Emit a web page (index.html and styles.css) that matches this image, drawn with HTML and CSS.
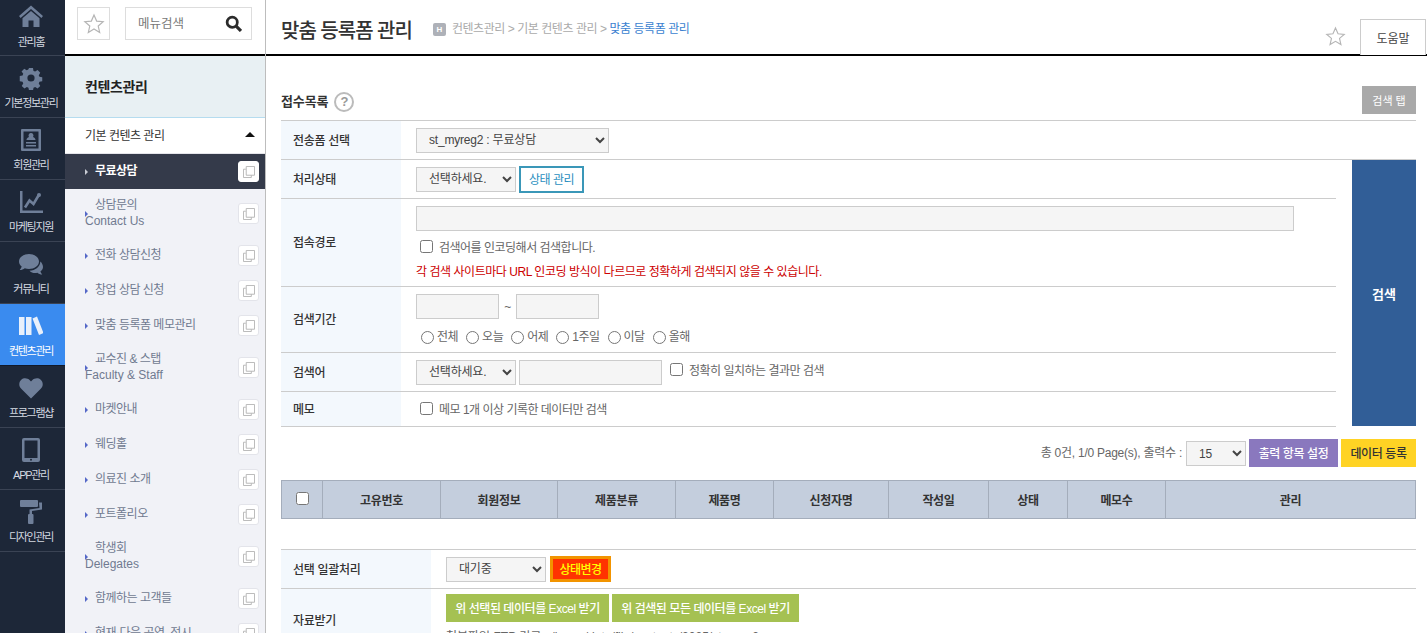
FILE: index.html
```html
<!DOCTYPE html>
<html lang="ko">
<head>
<meta charset="utf-8">
<title>맞춤 등록폼 관리</title>
<link rel="stylesheet" href="styles.css">
</head>
<body>
<svg class="defs" width="0" height="0" aria-hidden="true">
  <symbol id="copy" viewBox="0 0 13 13"><path d="M.5 3.500h2.500M.5 3.500v9h8.500v-2.500M3.500.5h9v9.500h-9z" fill="none" stroke="currentColor"/></symbol>
  <symbol id="star" viewBox="0 0 24 24"><path d="M12 2.200l2.900 6.600 7.100.7-5.400 4.700 1.600 7-6.200-3.700-6.200 3.700 1.600-7L2 9.500l7.100-.7z" fill="none" stroke="currentColor" stroke-width="1.300"/></symbol>
</svg>
<nav class="rail">
  <a class="rail-item"><svg class="rail-icon" viewBox="0 0 24 24"><path d="M12 1.500 0 12l1.600 2L12 5.100l10.400 8.900 1.600-2zM12 7 3.500 14.300V23H9.500v-6.500h5V23h6v-8.700z"/></svg><span>관리홈</span></a>
  <a class="rail-item"><svg class="rail-icon" viewBox="0 0 24 24"><path fill-rule="evenodd" d="M9.800 1h4.400l.6 3.100 1.800.8 2.700-1.700 3 3-1.700 2.700.8 1.800 3.100.6v4.400l-3.100.6-.8 1.800 1.700 2.700-3 3-2.700-1.700-1.800.8-.6 3.100H9.800l-.6-3.100-1.800-.8-2.700 1.700-3-3 1.700-2.700-.8-1.800-3.100-.6V9.800l3.100-.6.800-1.800L1.500 4.700l3-3 2.700 1.700 1.800-.8zM12 8a4 4 0 1 0 0 8 4 4 0 0 0 0-8z" transform="translate(1.200 1.200) scale(.9)"/></svg><span>기본정보관리</span></a>
  <a class="rail-item"><svg class="rail-icon" viewBox="0 0 24 24"><path fill-rule="evenodd" d="M3 1h18a1 1 0 0 1 1 1v20a1 1 0 0 1-1 1H3a1 1 0 0 1-1-1V2a1 1 0 0 1 1-1zm1.500 2.500v17h15v-17zM12 5a2.500 2.500 0 0 1 2 4c1.500.5 2.500 1.500 2.500 3h-9c0-1.500 1-2.500 2.500-3a2.500 2.500 0 0 1 2-4zM7 14h10v1.500H7zm0 3h10v1.500H7z"/></svg><span>회원관리</span></a>
  <a class="rail-item"><svg class="rail-icon" viewBox="0 0 24 24"><path d="M1 1h2.500v19.500H24V23H1z"/><path d="M6 17.500l4.500-7 4 3.500 5-8.500" fill="none" stroke="currentColor" stroke-width="2.600"/><circle cx="20" cy="5" r="2"/></svg><span>마케팅지원</span></a>
  <a class="rail-item"><svg class="rail-icon" viewBox="0 0 24 24"><path d="M10 2C4.500 2 0 5.300 0 9.500c0 2 1 3.800 2.700 5.100-.3 1.300-1 2.400-2 3.400 2 0 3.800-.7 5.100-1.800 1.300.5 2.700.8 4.200.8 5.500 0 10-3.300 10-7.500S15.500 2 10 2z"/><path d="M21.300 9.500c.1 5-5 9-10.800 9.200 1.200 1.500 3.500 2.300 5.700 2.300.7 0 1.500-.1 2.200-.3 1.200 1 2.800 1.800 4.800 1.800-.8-.8-1.500-1.900-1.800-3 1.600-1.200 2.600-2.800 2.600-4.500 0-2.200-1.100-4.200-2.700-5.500z"/></svg><span>커뮤니티</span></a>
  <a class="rail-item active"><svg class="rail-icon" viewBox="0 0 24 24"><path d="M0 3h5.500v18H0zM7 3h5.500v18H7zM13.500 4.500l4.500-2L24.500 19l-4.500 2z"/></svg><span>컨텐츠관리</span></a>
  <a class="rail-item"><svg class="rail-icon" viewBox="0 0 24 24"><path d="M12 22.500 2 12.500C-.5 9.800-.2 5.800 2.300 3.700 4.800 1.600 8.500 2 10.800 4.300L12 5.500l1.200-1.200c2.300-2.300 6-2.700 8.500-.6 2.500 2.100 2.800 6.100.3 8.800z"/></svg><span>프로그램샵</span></a>
  <a class="rail-item"><svg class="rail-icon" viewBox="0 0 24 24"><path fill-rule="evenodd" d="M5 0h14a2 2 0 0 1 2 2v20a2 2 0 0 1-2 2H5a2 2 0 0 1-2-2V2a2 2 0 0 1 2-2zm.500 2.500v17.500h13V2.500zM12 20.800a1 1 0 1 0 0 2 1 1 0 0 0 0-2z"/></svg><span>APP관리</span></a>
  <a class="rail-item"><svg class="rail-icon" viewBox="0 0 24 24"><path d="M2 0h16a1 1 0 0 1 1 1v5a1 1 0 0 1-1 1H2a1 1 0 0 1-1-1V1a1 1 0 0 1 1-1zM20 2.500h3v7l-10 1.500v3h-2.500V9.500l10-1.500z"/><rect x="9" y="14" width="5.500" height="10" rx="1"/></svg><span>디자인관리</span></a>
</nav>
<aside class="panel">
  <div class="panel-top">
    <button class="fav-box"><svg class="star-icon"><use href="#star"/></svg></button>
    <div class="menu-search"><span>메뉴검색</span>
      <svg class="mag" viewBox="0 0 16 16"><circle cx="6.800" cy="6.800" r="4.800" fill="none" stroke="currentColor" stroke-width="2.600"/><path d="M10.500 10.500 15 15" stroke="currentColor" stroke-width="3"/></svg>
    </div>
  </div>
  <h2 class="panel-title">컨텐츠관리</h2>
  <div class="sub-head"><span>기본 컨텐츠 관리</span><i class="caret"></i></div>
  <ul class="menu">
    <li class="menu-item current"><a>무료상담</a><b class="copy"><svg><use href="#copy"/></svg></b></li>
    <li class="menu-item double"><a>상담문의<br><span class="latin">Contact Us</span></a><b class="copy"><svg><use href="#copy"/></svg></b></li>
    <li class="menu-item"><a>전화 상담신청</a><b class="copy"><svg><use href="#copy"/></svg></b></li>
    <li class="menu-item"><a>창업 상담 신청</a><b class="copy"><svg><use href="#copy"/></svg></b></li>
    <li class="menu-item"><a>맞춤 등록폼 메모관리</a><b class="copy"><svg><use href="#copy"/></svg></b></li>
    <li class="menu-item double"><a>교수진 &amp; 스탭<br><span class="latin">Faculty &amp; Staff</span></a><b class="copy"><svg><use href="#copy"/></svg></b></li>
    <li class="menu-item"><a>마켓안내</a><b class="copy"><svg><use href="#copy"/></svg></b></li>
    <li class="menu-item"><a>웨딩홀</a><b class="copy"><svg><use href="#copy"/></svg></b></li>
    <li class="menu-item"><a>의료진 소개</a><b class="copy"><svg><use href="#copy"/></svg></b></li>
    <li class="menu-item"><a>포트폴리오</a><b class="copy"><svg><use href="#copy"/></svg></b></li>
    <li class="menu-item double"><a>학생회<br><span class="latin">Delegates</span></a><b class="copy"><svg><use href="#copy"/></svg></b></li>
    <li class="menu-item"><a>함께하는 고객들</a><b class="copy"><svg><use href="#copy"/></svg></b></li>
    <li class="menu-item"><a>현재·다음 공연, 전시</a><b class="copy"><svg><use href="#copy"/></svg></b></li>
  </ul>
</aside>
<main class="main">
  <header class="page-head">
    <h1>맞춤 등록폼 관리</h1>
    <div class="crumbs"><i class="h-badge">H</i><span>컨텐츠관리 &gt; 기본 컨텐츠 관리 &gt; </span><em>맞춤 등록폼 관리</em></div>
    <svg class="page-star"><use href="#star"/></svg>
    <button class="help">도움말</button>
  </header>
  <section class="content">
    <div class="section-head">
      <h3>접수목록</h3><i class="q">?</i>
      <button class="tab-btn">검색 탭</button>
    </div>
    <div class="form-row first">
      <div class="label">전송폼 선택</div>
      <div class="field"><select class="sel-form"><option>st_myreg2 : 무료상담</option></select></div>
    </div>
    <div class="search-body">
      <div class="rows">
        <div class="form-row h39">
          <div class="label">처리상태</div>
          <div class="field"><select class="sel"><option>선택하세요.</option></select><button class="state-btn">상태 관리</button></div>
        </div>
        <div class="form-row h88">
          <div class="label">접속경로</div>
          <div class="field stack">
            <input class="inp-wide" type="text">
            <label class="chk"><input type="checkbox">검색어를 인코딩해서 검색합니다.</label>
            <p class="warn">각 검색 사이트마다 URL 인코딩 방식이 다르므로 정확하게 검색되지 않을 수 있습니다.</p>
          </div>
        </div>
        <div class="form-row h66">
          <div class="label">검색기간</div>
          <div class="field stack">
            <div class="dates"><input class="inp-date" type="text"><span>~</span><input class="inp-date" type="text"></div>
            <div class="radios">
              <label><input type="radio" name="p">전체</label><label><input type="radio" name="p">오늘</label><label><input type="radio" name="p">어제</label><label><input type="radio" name="p">1주일</label><label><input type="radio" name="p">이달</label><label><input type="radio" name="p">올해</label>
            </div>
          </div>
        </div>
        <div class="form-row h39">
          <div class="label">검색어</div>
          <div class="field"><select class="sel"><option>선택하세요.</option></select><input class="inp-word" type="text"><label class="chk inline"><input type="checkbox">정확히 일치하는 결과만 검색</label></div>
        </div>
        <div class="form-row h35">
          <div class="label">메모</div>
          <div class="field"><label class="chk memo"><input type="checkbox">메모 1개 이상 기록한 데이터만 검색</label></div>
        </div>
      </div>
      <button class="search-btn">검색</button>
    </div>
    <div class="toolbar">
      <span>총 0건, 1/0 Page(s), 출력수 :</span>
      <select class="sel-count"><option>15</option></select>
      <button class="btn purple">출력 항목 설정</button>
      <button class="btn yellow">데이터 등록</button>
    </div>
    <table class="list">
      <thead><tr>
        <th class="c0"><input type="checkbox"></th><th class="c1">고유번호</th><th class="c2">회원정보</th><th class="c3">제품분류</th><th class="c4">제품명</th><th class="c5">신청자명</th><th class="c6">작성일</th><th class="c7">상태</th><th class="c8">메모수</th><th>관리</th>
      </tr></thead>
    </table>
    <div class="bulk">
      <div class="bulk-row r39">
        <div class="bulk-label">선택 일괄처리</div>
        <div class="bulk-field"><select class="sel-wait"><option>대기중</option></select><button class="change">상태변경</button></div>
      </div>
      <div class="bulk-row">
        <div class="bulk-label tall">자료받기</div>
        <div class="bulk-field col">
          <div class="excel"><button class="btn green w1">위 선택된 데이터를 Excel 받기</button><button class="btn green w2">위 검색된 모든 데이터를 Excel 받기</button></div>
          <p class="ftp">첨부파일 FTP 경로 : /home/data/file/contents/2025/storage2</p>
        </div>
      </div>
    </div>
  </section>
</main>
</body>
</html>
```
FILE: styles.css
```css
* { box-sizing: border-box; }
html, body { height: 100%; }
body {
  margin: 0;
  display: flex;
  overflow: hidden;
  font-family: "Liberation Sans", "Noto Sans CJK KR", sans-serif;
  font-size: 12px;
  letter-spacing: -0.5px;
  color: #555;
  background: #fff;
}
.defs { position: absolute; }
button { font-family: inherit; cursor: pointer; letter-spacing: inherit; }
h1, h2, h3, p, ul { margin: 0; padding: 0; }
ul { list-style: none; }
i, em { font-style: normal; }
.latin { letter-spacing: 0; }

.rail { width: 65px; flex: none; background: #1d2738; }
.rail-item {
  height: 62px;
  display: flex;
  flex-direction: column;
  align-items: center;
  padding: 10px 3px 0 0;
  border-bottom: 1px solid #3a4354;
  color: #d5dae2;
  font-size: 11px;
  letter-spacing: -1.3px;
  line-height: 14px;
  white-space: nowrap;
}
.rail-item:first-child { height: 56px; padding-top: 4px; }
.rail-icon { width: 24px; height: 24px; fill: #6f7f99; color: #6f7f99; margin-bottom: 6px; }
.rail-item:first-child .rail-icon { margin-bottom: 7px; }
.rail-item.active { background: #3a8bef; color: #fff; border-bottom-color: #11192a; }
.rail-item.active .rail-icon { fill: #e8f0fb; color: #e8f0fb; }

.panel { width: 201px; flex: none; border-right: 1px solid #bdbdbd; display: flex; flex-direction: column; overflow: hidden; }
.panel-top {
  height: 56px;
  flex: none;
  border-bottom: 2px solid #000;
  display: flex;
  padding: 7px 13px 0 12px;
  gap: 15px;
}
.fav-box { width: 33px; height: 33px; padding: 0; background: #fff; border: 1px solid #ddd; display: flex; align-items: center; justify-content: center; }
.star-icon { width: 22px; height: 22px; color: #b5b5b5; }
.menu-search {
  width: 127px; height: 33px;
  border: 1px solid #ddd;
  display: flex; align-items: center; justify-content: space-between;
  padding: 0 9px 2px 12px;
  color: #777;
  font-size: 12.5px;
  letter-spacing: 0;
}
.mag { width: 17px; height: 17px; color: #2b2b2b; margin-top: 2px; }
.panel-title {
  height: 62px; flex: none;
  background: #e8f0f3;
  border-bottom: 1px solid #b5dcef;
  padding: 21px 0 0 20px;
  font-size: 14px; line-height: 20px; font-weight: 700; color: #222;
  letter-spacing: -0.4px;
}
.sub-head {
  height: 36px; flex: none;
  display: flex; align-items: center; justify-content: space-between;
  padding: 0 10px 3px 20px;
  color: #333;
  border-bottom: 1px solid #e5e5ea;
}
.caret { width: 0; height: 0; border: 5px solid transparent; border-top: 0; border-bottom: 5px solid #111; }
.menu { flex: 1; background: #f1f2f7; }
.menu-item {
  position: relative;
  height: 35px;
  display: flex; align-items: center;
  padding: 0 6px 0 20px;
  color: #707a90;
  justify-content: space-between;
}
.menu-item::before {
  content: "";
  position: absolute; left: 20px; top: 50%;
  margin-top: -3px;
  border: 3px solid transparent;
  border-left: 3px solid #5568c8;
  border-right: 0;
}
.menu-item a { text-indent: 10px; line-height: 16px; white-space: nowrap; margin-bottom: 2px; }
.menu-item.double { height: 49px; }
.menu-item.current { background: #343a4a; color: #fff; font-weight: 700; }
.menu-item.current::before { border-left-color: #c9ccd4; }
.copy {
  width: 21px; height: 21px; flex: none;
  background: #fff;
  border: 1px solid #e3e4ea;
  border-radius: 3px;
  display: flex; align-items: center; justify-content: center;
  color: #b4b4b4;
}
.copy svg { width: 12px; height: 12px; }
.current .copy { border-color: #fff; }

.main { flex: 1; min-width: 0; display: flex; flex-direction: column; overflow: hidden; }
.page-head {
  height: 56px; flex: none;
  border-bottom: 2px solid #000;
  display: flex; align-items: flex-start;
  padding-left: 15px;
  position: relative;
}
.page-head h1 { font-size: 20px; line-height: 28px; font-weight: 500; color: #333; margin-top: 17px; white-space: nowrap; letter-spacing: -1px; }
.crumbs { display: flex; align-items: center; margin: 21px 0 0 21px; color: #aaa; line-height: 16px; white-space: pre; letter-spacing: -0.45px; }
.crumbs em { color: #3a7fd0; }
.h-badge { width: 13px; height: 13px; background: #aeb1b8; border-radius: 2px; color: #fff; font-size: 8px; font-weight: 700; line-height: 13px; text-align: center; margin-right: 6px; letter-spacing: 0; }
.page-star { width: 21px; height: 21px; color: #b5b5b5; margin: 26px 0 0 auto; }
.help { width: 66px; height: 36px; margin: 19px 1px 0 14px; background: #fff; border: 1px solid #ccc; border-bottom: 0; color: #444; font-size: 12px; padding: 0; letter-spacing: 0; }

.content { padding: 30px 11px 0 15px; }
.section-head { height: 34px; display: flex; align-items: flex-start; }
.section-head h3 { font-size: 13px; line-height: 18px; font-weight: 700; color: #333; margin-top: 7px; letter-spacing: -0.1px; }
.q { width: 20px; height: 20px; border: 2px solid #bbb; border-radius: 50%; color: #999; font-size: 13px; line-height: 16px; text-align: center; margin: 6px 0 0 6px; font-weight: 700; letter-spacing: 0; }
.tab-btn { margin-left: auto; width: 54px; height: 28px; border: 0; padding: 0; background: #a9a9a9; color: #fff; font-size: 11px; letter-spacing: 0; }

.form-row { display: flex; border-bottom: 1px solid #ccc; color: #666; }
.form-row.first { height: 40px; border-top: 1px solid #ccc; }
.h39 { height: 39px; }
.h88 { height: 88px; }
.h66 { height: 66px; }
.h35 { height: 35px; }
.label { width: 120px; flex: none; background: #f3f8fd; padding: 0 0 2px 12px; display: flex; align-items: center; font-weight: 500; color: #333; letter-spacing: -0.3px; }
.field { flex: 1; padding-left: 15px; display: flex; align-items: center; min-width: 0; }
.field.stack { flex-direction: column; align-items: flex-start; justify-content: flex-start; padding-top: 7px; }
select { height: 25px; border: 1px solid #ccc; background-color: #f5f5f5; color: #444; font: 12px "Liberation Sans", "Noto Sans CJK KR", sans-serif; letter-spacing: -0.2px; padding: 0 8px; }
input[type=text] { height: 25px; border: 1px solid #ccc; background: #f5f5f5; padding: 0; }
.sel-form { width: 193px; }
.sel { width: 100px; }
.state-btn { width: 65px; height: 27px; margin-left: 3px; background: #fff; border: 2px solid #3a97b8; color: #2a8fc0; font-size: 12px; padding: 0 0 2px; }
.search-body { display: flex; gap: 16px; }
.rows { flex: 1; min-width: 0; }
.search-btn { width: 64px; margin-bottom: 1px; border: 0; background: #315e97; color: #fff; font-size: 13px; font-weight: 700; padding: 0; letter-spacing: 0; }
.inp-wide { width: 878px; }
.chk { display: flex; align-items: center; color: #666; white-space: nowrap; }
.chk input { margin: 0 6px 0 4px; width: 13px; height: 13px; }
.stack .chk { margin-top: 7px; }
.warn { color: #c00; margin-top: 9px; line-height: 16px; white-space: nowrap; letter-spacing: -0.46px; }
.inp-word { width: 143px; margin-left: 3px; }
.chk.inline { margin-left: 4px; margin-top: -6px; }
.chk.inline input { margin: 0 6px 0 4px; }
.chk.memo { margin-top: -2px; }
.dates { display: flex; align-items: center; }
.inp-date { width: 83px; }
.dates span { width: 17px; text-align: center; }
.radios { display: flex; gap: 3px; margin-top: 10px; line-height: 16px; }
.radios label { display: flex; align-items: center; color: #666; }
.radios input { margin: 0 3px 0 5px; width: 13px; height: 13px; }

.toolbar { height: 53px; display: flex; align-items: flex-start; justify-content: flex-end; padding-top: 12px; color: #666; letter-spacing: -0.25px; }
.toolbar span { margin: 4px 4px 0 0; }
.sel-count { width: 60px; margin: 2px 3px 0 0; padding: 0 8px; }
.btn { height: 28px; border: 0; padding: 0 0 2px; font-size: 12px; font-weight: 500; letter-spacing: -0.4px; }
.purple { width: 89px; background: #8a78be; color: #fff; margin-right: 3px; }
.yellow { width: 75px; background: #ffd324; color: #333; }

.list { width: 100%; border-collapse: collapse; table-layout: fixed; }
.list th { height: 38px; background: #c4cedd; border: 1px solid #a4adbb; font-size: 12px; font-weight: 700; color: #333; padding: 0; letter-spacing: -0.3px; }
.list .c0 { width: 41px; }
.list .c1 { width: 118px; }
.list .c2 { width: 117px; }
.list .c3 { width: 118px; }
.list .c4 { width: 98px; }
.list .c5 { width: 115px; }
.list .c6 { width: 100px; }
.list .c7 { width: 79px; }
.list .c8 { width: 98px; }
.list input { width: 13px; height: 13px; margin: 0; }

.bulk { margin-top: 30px; border-top: 1px solid #ccc; }
.bulk-row { display: flex; border-bottom: 1px solid #ccc; }
.r39 { height: 39px; }
.bulk-label { width: 150px; flex: none; background: #f3f8fd; padding: 0 0 2px 12px; display: flex; align-items: center; color: #333; font-weight: 500; letter-spacing: -0.3px; }
.bulk-label.tall { height: 62px; }
.bulk-field { padding-left: 15px; display: flex; align-items: center; }
.bulk-field.col { flex-direction: column; align-items: flex-start; padding-top: 5px; }
.sel-wait { width: 100px; }
.change { width: 61px; height: 26px; margin-left: 4px; background: #f30; border: 3px solid #f29400; color: #ff0; font-size: 12px; font-weight: 500; padding: 0 0 2px; }
.excel { display: flex; gap: 3px; }
.green { background: #a5c152; color: #fff; letter-spacing: -0.45px; }
.w1 { width: 163px; }
.w2 { width: 187px; }
.ftp { margin-top: 5px; color: #666; white-space: nowrap; letter-spacing: 0; }
```
